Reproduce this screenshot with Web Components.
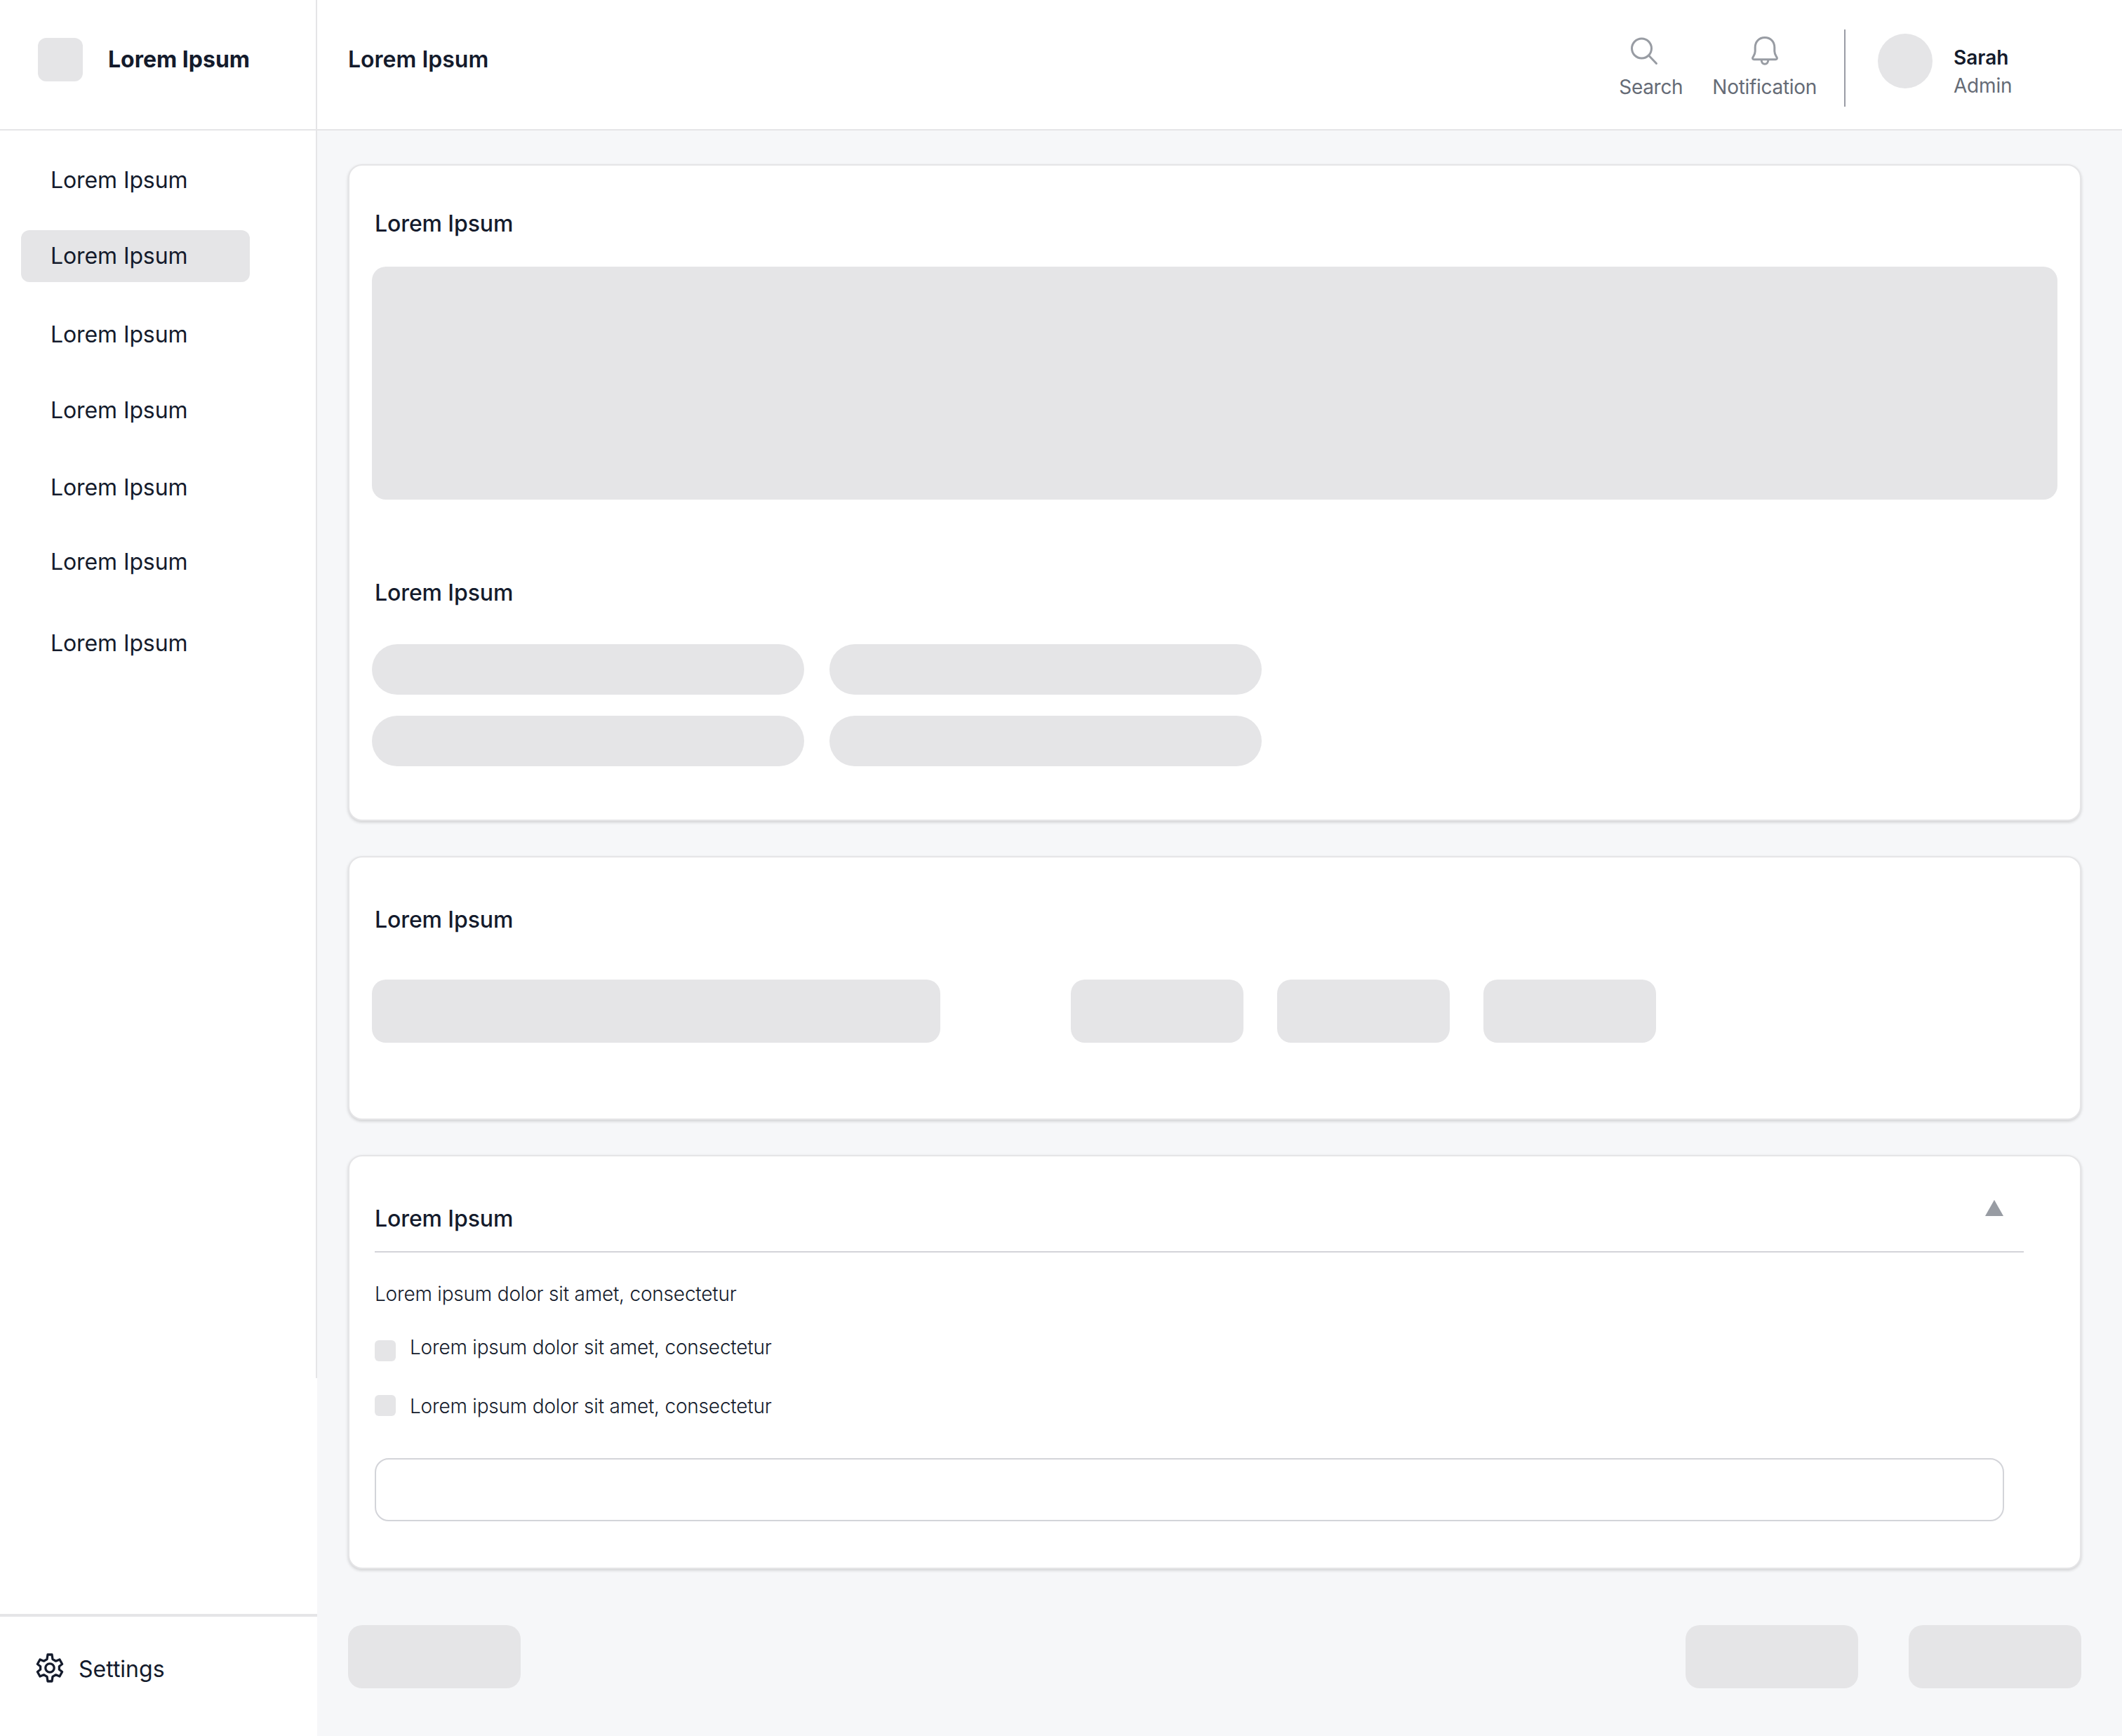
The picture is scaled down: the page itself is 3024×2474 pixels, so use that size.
<!DOCTYPE html>
<html lang="en">
<head>
<meta charset="utf-8">
<title>Dashboard</title>
<style>
  body {
    margin: 0;
    font-family: Inter, "Liberation Sans", sans-serif;
    font-size: 32px;
    line-height: 40px;
    color: #141b2c;
    background-color: #f6f7f9;
    --block: #e5e5e7;
    --line: #e5e5e7;
    --muted: #656b76;
    --icon: #989ca3;
    --field: #d3d4d9;
  }
</style>
</head>
<body>

<app-shell>
  <side-bar slot="side">
    <span slot="brand">Lorem Ipsum</span>
    <nav-item style="--gap: 34px">Lorem Ipsum</nav-item>
    <nav-item active style="--gap: 34px">Lorem Ipsum</nav-item>
    <nav-item style="--gap: 38px">Lorem Ipsum</nav-item>
    <nav-item style="--gap: 34px">Lorem Ipsum</nav-item>
    <nav-item style="--gap: 36px">Lorem Ipsum</nav-item>
    <nav-item style="--gap: 32px">Lorem Ipsum</nav-item>
    <nav-item style="--gap: 42px">Lorem Ipsum</nav-item>
    <span slot="settings">Settings</span>
  </side-bar>

  <top-bar slot="top">
    <span slot="title">Lorem Ipsum</span>
    <icon-action icon="search">Search</icon-action>
    <icon-action icon="bell">Notification</icon-action>
    <user-badge slot="user" name="Sarah" role="Admin"></user-badge>
  </top-bar>

  <content-card style="--height: 936px; --pad: 63px">
    <card-title>Lorem Ipsum</card-title>
    <block-row style="margin-top: 41px"><gray-block w="2402" h="332"></gray-block></block-row>
    <card-title style="margin-top: 113px">Lorem Ipsum</card-title>
    <block-row style="margin-top: 53px; gap: 36px">
      <gray-block w="616" h="72" r="36"></gray-block>
      <gray-block w="616" h="72" r="36"></gray-block>
    </block-row>
    <block-row style="margin-top: 30px; gap: 36px">
      <gray-block w="616" h="72" r="36"></gray-block>
      <gray-block w="616" h="72" r="36"></gray-block>
    </block-row>
  </content-card>

  <content-card style="--height: 376px; --pad: 69px">
    <card-title>Lorem Ipsum</card-title>
    <block-row style="margin-top: 65px; gap: 48px">
      <gray-block w="810" h="90" style="margin-right: 138px"></gray-block>
      <gray-block w="246" h="90"></gray-block>
      <gray-block w="246" h="90"></gray-block>
      <gray-block w="246" h="90"></gray-block>
    </block-row>
  </content-card>

  <content-card style="--height: 590px; --pad: 62px">
    <fold-panel>
      <card-title slot="title">Lorem Ipsum</card-title>
      <p-line>Lorem ipsum dolor sit amet, consectetur</p-line>
      <check-line style="--top: 36px; --shift: 7px">Lorem ipsum dolor sit amet, consectetur</check-line>
      <check-line style="--top: 44px; --shift: 1px">Lorem ipsum dolor sit amet, consectetur</check-line>
      <text-field></text-field>
    </fold-panel>
  </content-card>

  <action-row slot="actions">
    <gray-block w="246" h="90"></gray-block>
    <gray-block slot="end" w="246" h="90"></gray-block>
    <gray-block slot="end" w="246" h="90"></gray-block>
  </action-row>
</app-shell>

<script>
(function() {

  /* Icons */
  const ICONS = {
    search: `
      <svg width="40" height="42" viewBox="0 0 40 42" fill="none" stroke="currentColor" stroke-width="3" stroke-linecap="round">
        <circle cx="16.5" cy="17" r="14"/>
        <path d="M26.5 27 L37.5 38.5"/>
      </svg>`,
    bell: `
      <svg width="40" height="42" viewBox="0 0 40 42" fill="none" stroke="currentColor" stroke-width="3" stroke-linejoin="round">
        <path d="M20 1.5 C11.8 1.5 6.2 7.5 6.2 15.5 V21 C6.2 25 4.6 27 3 29.6 C2 31.4 2.8 32.8 4.8 32.8 H35.2 C37.2 32.8 38 31.4 37 29.6 C35.4 27 33.8 25 33.8 21 V15.5 C33.8 7.5 28.2 1.5 20 1.5 Z"/>
        <path d="M15.2 33.5 C15.2 37 17.2 39.2 20 39.2 C22.8 39.2 24.8 37 24.8 33.5"/>
      </svg>`,
    gear: `
      <svg width="42" height="42" viewBox="0 0 42 42" fill="none" stroke="currentColor" stroke-width="3.3" stroke-linejoin="round">
        <path d="M18 2 H24 L25 8.6 L29.6 11.2 L35 9 L38.6 15.5 L34.4 18.7 V23.3 L38.6 26.5 L35 33 L29.6 30.8 L25 33.4 L24 40 H18 L17 33.4 L12.4 30.8 L7 33 L3.4 26.5 L7.6 23.3 V18.7 L3.4 15.5 L7 9 L12.4 11.2 L17 8.6 Z"/>
        <circle cx="21" cy="21" r="6.2"/>
      </svg>`,
    triangle: `
      <svg width="26" height="23" viewBox="0 0 26 23" fill="currentColor"><path d="M13 0 L26 23 H0 Z"/></svg>`
  };

  /* Shared base: opens the shadow root and fills it from render() */
  class BaseElement extends HTMLElement {
    constructor() {
      super();
      this._shadow = this.attachShadow({ mode: "open" });
    }

    connectedCallback() {
      this._shadow.innerHTML = this.render();
    }
  }

  /* Layout */
  class AppShell extends BaseElement {
    render() {
      return `
        <style>
          :host { display: grid; grid-template-columns: 452px 1fr; grid-template-rows: 186px 1fr; height: 2474px; }
          .side { grid-row: 1 / 3; display: flex; }
          main { display: flex; flex-direction: column; gap: 50px; padding: 48px 58px 0 44px; }
          .actions { margin-top: 30px; }
        </style>
        <div class="side"><slot name="side"></slot></div>
        <slot name="top"></slot>
        <main>
          <slot></slot>
          <div class="actions"><slot name="actions"></slot></div>
        </main>
      `;
    }
  }

  class SideBar extends BaseElement {
    render() {
      return `
        <style>
          :host { display: flex; flex-direction: column; width: 452px; background-color: #fff; }
          .brand {
            display: flex; align-items: center; gap: 36px;
            height: 184px; box-sizing: border-box; padding: 0 0 14px 54px;
            border-right: 2px solid var(--line);
            font-weight: 700;
          }
          .logo { width: 64px; height: 62px; border-radius: 12px; background-color: var(--block); }
          nav {
            height: 1780px; box-sizing: border-box; padding-left: 30px;
            border-top: 2px solid var(--line); border-right: 2px solid var(--line);
          }
          .settings {
            display: flex; gap: 20px;
            margin-top: auto; height: 174px; box-sizing: border-box; padding: 52px 0 0 50px;
            border-top: 4px solid var(--line);
          }
          .settings div { margin-top: 3px; }
          svg { display: block; }
        </style>
        <div class="brand"><div class="logo"></div><slot name="brand"></slot></div>
        <nav><slot></slot></nav>
        <div class="settings">${ICONS.gear}<div><slot name="settings"></slot></div></div>
      `;
    }
  }

  class NavItem extends BaseElement {
    render() {
      return `
        <style>
          :host {
            display: block; width: 326px; height: 74px; box-sizing: border-box;
            margin-top: var(--gap); padding: 17px 0 0 42px; border-radius: 12px;
            letter-spacing: -0.1px;
          }
          :host([active]) { background-color: var(--block); }
        </style>
        <slot></slot>
      `;
    }
  }

  class TopBar extends BaseElement {
    render() {
      return `
        <style>
          :host {
            display: flex; align-items: flex-start; height: 186px; box-sizing: border-box;
            padding-right: 156px; background-color: #fff; border-bottom: 2px solid var(--line);
          }
          .title { margin: 65px auto 0 44px; font-weight: 600; }
          .tools { display: flex; gap: 42px; margin-top: 52px; }
          .rule { width: 2px; height: 110px; margin: 42px 46px 0 39px; background-color: #9a9ca5; }
        </style>
        <div class="title"><slot name="title"></slot></div>
        <div class="tools"><slot></slot></div>
        <div class="rule"></div>
        <slot name="user"></slot>
      `;
    }
  }

  class IconAction extends BaseElement {
    render() {
      return `
        <style>
          :host {
            display: flex; flex-direction: column; align-items: center;
            font-size: 28px; line-height: 36px; letter-spacing: -0.3px; color: var(--muted);
          }
          svg { display: block; color: var(--icon); }
          :host([icon="search"]) svg { margin-right: 20px; }
          .label { margin-top: 12px; }
        </style>
        ${ICONS[this.getAttribute("icon")]}
        <div class="label"><slot></slot></div>
      `;
    }
  }

  class UserBadge extends BaseElement {
    render() {
      return `
        <style>
          :host { display: flex; gap: 30px; font-size: 28px; line-height: 40px; }
          .avatar { width: 78px; height: 78px; margin-top: 48px; border-radius: 50%; background-color: var(--block); }
          .text { width: 84px; margin-top: 62px; }
          .name { font-weight: 600; }
          .role { letter-spacing: -0.2px; color: var(--muted); }
        </style>
        <div class="avatar"></div>
        <div class="text">
          <div class="name">${this.getAttribute("name")}</div>
          <div class="role">${this.getAttribute("role")}</div>
        </div>
      `;
    }
  }

  /* Content */
  class ContentCard extends BaseElement {
    render() {
      return `
        <style>
          :host {
            display: block; height: var(--height); box-sizing: border-box; padding: var(--pad) 32px 0;
            background-color: #fff; border: 2px solid var(--line); border-radius: 20px;
            box-shadow: 0 2px 4px rgba(0, 0, 0, 0.16);
          }
        </style>
        <slot></slot>
      `;
    }
  }

  class CardTitle extends BaseElement {
    render() {
      return `
        <style>
          :host { display: block; padding-left: 4px; font-weight: 500; letter-spacing: -0.1px; }
        </style>
        <slot></slot>
      `;
    }
  }

  class BlockRow extends BaseElement {
    render() {
      return `
        <style>
          :host { display: flex; }
        </style>
        <slot></slot>
      `;
    }
  }

  class GrayBlock extends BaseElement {
    render() {
      return `
        <style>
          :host {
            display: block;
            width: ${this.getAttribute("w")}px;
            height: ${this.getAttribute("h")}px;
            border-radius: ${this.getAttribute("r") || 20}px;
            background-color: var(--block);
          }
        </style>
      `;
    }
  }

  class FoldPanel extends BaseElement {
    render() {
      return `
        <style>
          :host { display: block; padding-left: 4px; }
          header {
            display: flex; justify-content: space-between;
            width: 2350px; height: 75px; box-sizing: border-box; padding-right: 29px;
            border-bottom: 2px solid var(--field);
          }
          .title { margin: 7px 0 0 -4px; }
          svg { display: block; color: var(--icon); }
        </style>
        <header><div class="title"><slot name="title"></slot></div>${ICONS.triangle}</header>
        <slot></slot>
      `;
    }
  }

  class PLine extends BaseElement {
    render() {
      return `
        <style>
          :host { display: block; margin-top: 39px; font-size: 28px; font-weight: 300; letter-spacing: -0.2px; }
        </style>
        <slot></slot>
      `;
    }
  }

  class CheckLine extends BaseElement {
    render() {
      return `
        <style>
          :host {
            display: flex; gap: 20px; margin-top: var(--top); height: 40px;
            font-size: 28px; font-weight: 300; letter-spacing: -0.2px;
          }
          .box { width: 30px; height: 30px; margin-top: calc(3px + var(--shift)); border-radius: 6px; background-color: var(--block); }
        </style>
        <div class="box"></div>
        <slot></slot>
      `;
    }
  }

  class TextField extends BaseElement {
    render() {
      return `
        <style>
          :host {
            display: block; width: 2322px; height: 90px; box-sizing: border-box;
            margin-top: 54px; border: 2px solid var(--field); border-radius: 20px;
          }
        </style>
      `;
    }
  }

  class ActionRow extends BaseElement {
    render() {
      return `
        <style>
          :host { display: flex; justify-content: space-between; }
          .end { display: flex; gap: 72px; }
        </style>
        <slot></slot>
        <div class="end"><slot name="end"></slot></div>
      `;
    }
  }

  /* Registration */
  customElements.define("app-shell", AppShell);
  customElements.define("side-bar", SideBar);
  customElements.define("nav-item", NavItem);
  customElements.define("top-bar", TopBar);
  customElements.define("icon-action", IconAction);
  customElements.define("user-badge", UserBadge);
  customElements.define("content-card", ContentCard);
  customElements.define("card-title", CardTitle);
  customElements.define("block-row", BlockRow);
  customElements.define("gray-block", GrayBlock);
  customElements.define("fold-panel", FoldPanel);
  customElements.define("p-line", PLine);
  customElements.define("check-line", CheckLine);
  customElements.define("text-field", TextField);
  customElements.define("action-row", ActionRow);
})();
</script>
</body>
</html>
